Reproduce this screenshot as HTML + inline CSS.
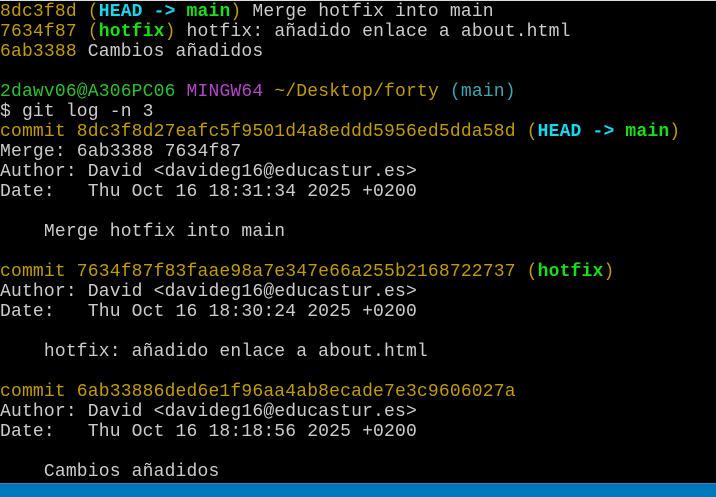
<!DOCTYPE html>
<html><head><style>
html,body{margin:0;padding:0;background:#000;width:716px;height:496px;overflow:hidden}
.t{position:absolute;left:0;top:2px;font-family:"Liberation Mono",monospace;font-size:18px;line-height:20px;color:#cccccc;white-space:pre;letter-spacing:0.17px}
.y{color:#c19c00}.c{color:#18d8f0;font-weight:bold}.g{color:#16e016;font-weight:bold}
.pg{color:#2fbf2f}.m{color:#b148c6}.cy{color:#3aa6b0}
.top{position:absolute;left:0;top:0;width:716px;height:1px;background:#ddd}
.bar{position:absolute;left:0;top:483px;width:716px;height:13px;background:#0078be;border-top:1px solid #3d7fa8}
</style></head><body>
<div class="top"></div>
<div class="t"><span class="y">8dc3f8d (</span><span class="c">HEAD -&gt; </span><span class="g">main</span><span class="y">)</span> Merge hotfix into main
<span class="y">7634f87 (</span><span class="g">hotfix</span><span class="y">)</span> hotfix: añadido enlace a about.html
<span class="y">6ab3388</span> Cambios añadidos

<span class="pg">2dawv06@A306PC06</span> <span class="m">MINGW64</span> <span class="y">~/Desktop/forty</span> <span class="cy">(main)</span>
$ git log -n 3
<span class="y">commit 8dc3f8d27eafc5f9501d4a8eddd5956ed5dda58d (</span><span class="c">HEAD -&gt; </span><span class="g">main</span><span class="y">)</span>
Merge: 6ab3388 7634f87
Author: David &lt;davideg16@educastur.es&gt;
Date:   Thu Oct 16 18:31:34 2025 +0200

    Merge hotfix into main

<span class="y">commit 7634f87f83faae98a7e347e66a255b2168722737 (</span><span class="g">hotfix</span><span class="y">)</span>
Author: David &lt;davideg16@educastur.es&gt;
Date:   Thu Oct 16 18:30:24 2025 +0200

    hotfix: añadido enlace a about.html

<span class="y">commit 6ab33886ded6e1f96aa4ab8ecade7e3c9606027a</span>
Author: David &lt;davideg16@educastur.es&gt;
Date:   Thu Oct 16 18:18:56 2025 +0200

    Cambios añadidos</div>
<div class="bar"></div>
</body></html>
